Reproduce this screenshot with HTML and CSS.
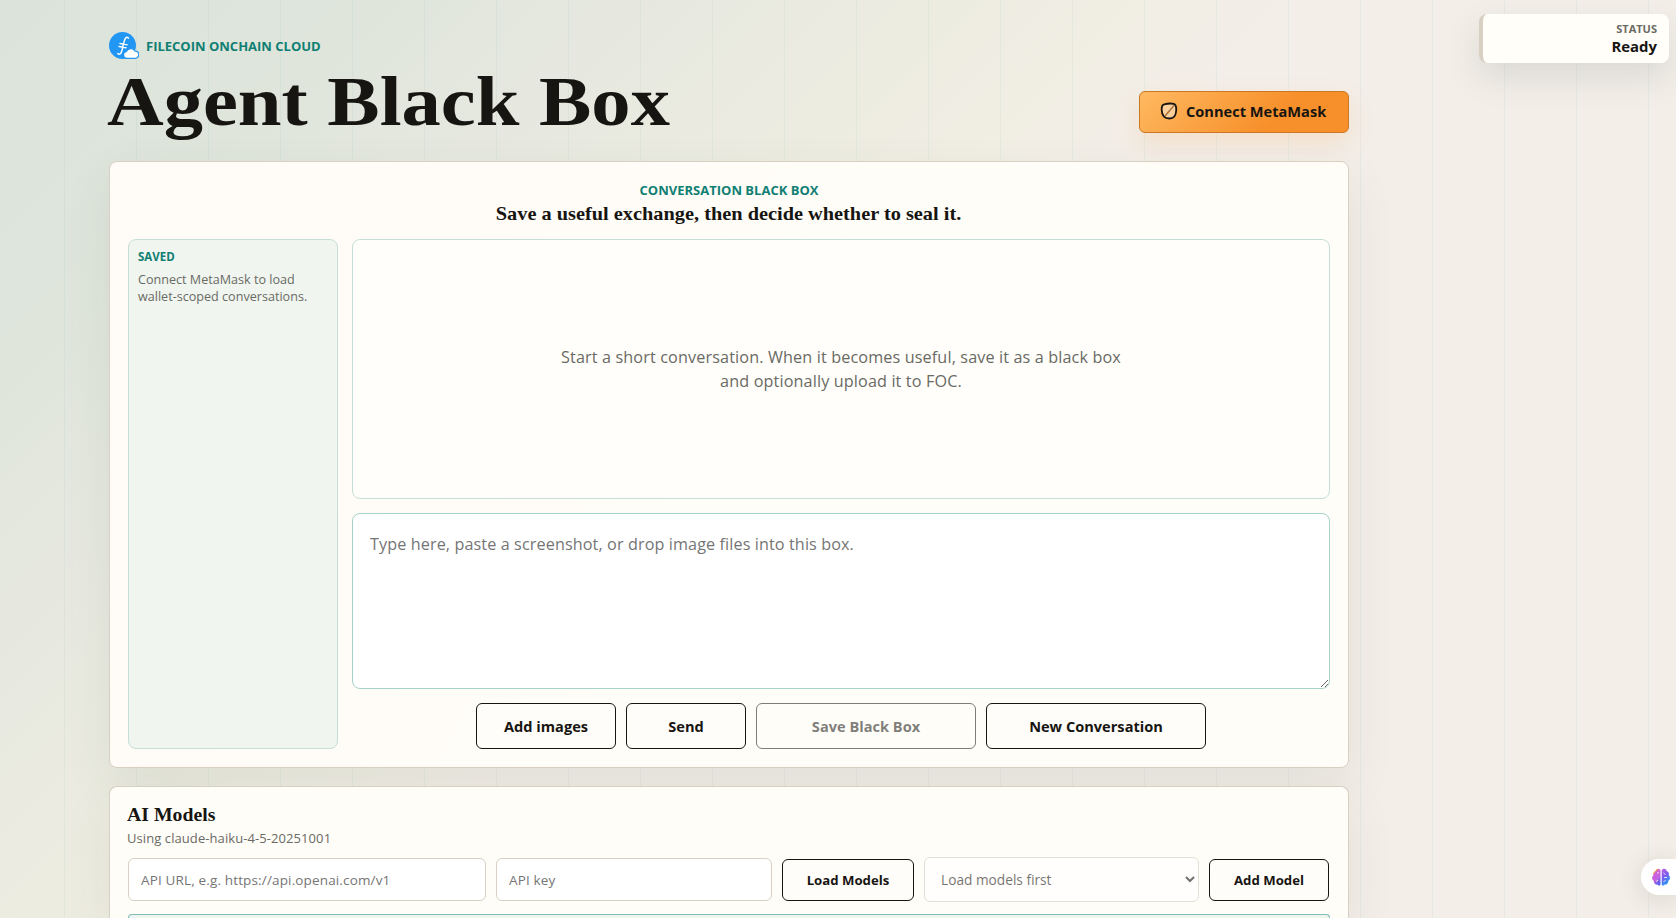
FILE: index.html
```html
<!DOCTYPE html>
<html lang="en">
<head>
  <meta charset="UTF-8">
  <title>Agent Black Box</title>
  <link rel="stylesheet" href="styles.css">
</head>
<body>
  <main class="shell">
    <header class="topbar">
      <div class="brand">
        <div class="brand-row">
          <svg class="logo" width="30" height="28" viewBox="0 0 30 28">
            <circle cx="13.500" cy="13.500" r="13.500" fill="#2196f3"/>
            <path d="M19.500 6.200C17.800 4 16 6 15.300 9L12.800 19C12.100 21.800 10.600 23 8.800 21.600M11 11.500l7 1.200M10 14.500l7 1.200" fill="none" stroke="#fff" stroke-width="1.400" stroke-linecap="round"/>
            <path d="M17.500 26.300a3.500 3.500 0 0 1-.2-6.900 5 5 0 0 1 8.800-.3 3.600 3.600 0 0 1 .2 7.200z" fill="#fff" stroke="#2196f3" stroke-width="1.300"/>
          </svg>
          <span class="eyebrow">FILECOIN ONCHAIN CLOUD</span>
        </div>
        <h1>Agent Black Box</h1>
      </div>
      <button class="wallet">
        <svg width="18" height="18" viewBox="0 0 18 18">
          <path d="M4.200 2.300Q9 1 13.800 1.800Q16.600 3 16.200 8.500Q15.800 16.500 9.500 16.500Q2 16.500 1.700 8Q1.400 3 4.200 2.300z" fill="#fbd09a" stroke="#171512" stroke-width="1.800"/>
          <path d="M5 14L14 3.500" stroke="#a4713c" stroke-width="1.400"/>
        </svg>
        <span>Connect MetaMask</span>
      </button>
    </header>

    <section class="panel conversation">
      <div class="panel-title">
        <span class="eyebrow">CONVERSATION BLACK BOX</span>
        <h2>Save a useful exchange, then decide whether to seal it.</h2>
      </div>
      <div class="workspace">
        <aside class="saved">
          <h3>SAVED</h3>
          <p>Connect MetaMask to load<br>wallet-scoped conversations.</p>
        </aside>
        <div class="chat">
          <div class="messages">
            <p>Start a short conversation. When it becomes useful, save it as a black box<br>and optionally upload it to FOC.</p>
          </div>
          <textarea class="composer" placeholder="Type here, paste a screenshot, or drop image files into this box."></textarea>
          <div class="actions">
            <button class="btn add">Add images</button>
            <button class="btn send">Send</button>
            <button class="btn wide" disabled>Save Black Box</button>
            <button class="btn wide">New Conversation</button>
          </div>
        </div>
      </div>
    </section>

    <section class="panel models">
      <h2>AI Models</h2>
      <p class="using">Using claude-haiku-4-5-20251001</p>
      <div class="model-form">
        <input type="text" placeholder="API URL, e.g. https://api.openai.com/v1">
        <input type="text" placeholder="API key">
        <button class="btn small">Load Models</button>
        <select disabled><option>Load models first</option></select>
        <button class="btn small">Add Model</button>
      </div>
      <div class="model-list"></div>
    </section>
  </main>

  <div class="status">
    <span class="status-label">STATUS</span>
    <strong>Ready</strong>
  </div>

  <div class="assistant">
    <svg width="18" height="18" viewBox="0 0 18 18">
      <defs>
        <linearGradient id="lobe-left" x1="0" y1="0" x2=".5" y2="1">
          <stop offset="0" stop-color="#f5a13c"/>
          <stop offset=".28" stop-color="#f0a04c"/>
          <stop offset=".36" stop-color="#cf62dc"/>
          <stop offset=".7" stop-color="#c462e0"/>
          <stop offset="1" stop-color="#5b62f0"/>
        </linearGradient>
        <linearGradient id="lobe-right" x1="0" y1="0" x2=".4" y2="1">
          <stop offset="0" stop-color="#c45fe0"/>
          <stop offset=".5" stop-color="#7a5cf0"/>
          <stop offset="1" stop-color="#2c9cf4"/>
        </linearGradient>
      </defs>
      <path d="M8.500 2.200C7.500-.2 3.600.3 3.500 3 1.300 3.400.8 6 1.500 7.200-.6 8.800-.1 12 1.800 12.700 1.500 15.500 4 17 5.500 16.600 6.700 18.500 8.500 17.600 8.500 16z" fill="url(#lobe-left)"/>
      <path d="M9.700 2.200C10.700-.2 14.500.3 14.600 3 16.800 3.400 17.300 6 16.600 7.200 18.700 8.800 18.200 12 16.300 12.700 16.600 15.500 14.100 17 12.600 16.600 11.400 18.500 9.700 17.600 9.700 16z" fill="url(#lobe-right)"/>
      <path d="M5 5.500l2-1.500M4 13.500l2-1.500M11.500 5l2 1.500M12 9.500h3M11.500 13.500l2-1" stroke="#fff" stroke-width=".8" fill="none"/>
    </svg>
  </div>
</body>
</html>
```
FILE: styles.css
```css
:root {
  --ink: #171512;
  --muted: #6a6a64;
  --teal: #0f7f73;
  --line: #d8d0c2;
  --line-teal: #c5dfd8;
}

* {
  box-sizing: border-box;
}

body {
  margin: 0;
  height: 918px;
  overflow: hidden;
  font-family: "Open Sans", "Noto Sans", sans-serif;
  color: var(--ink);
  background:
    repeating-linear-gradient(90deg, transparent 0 64px, rgba(15, 127, 115, 0.05) 64px 65px, transparent 65px 72px),
    linear-gradient(135deg, #dbe4db 0%, #dfe5db 14%, #e6e8df 24%, #edece1 37%, #f1eee4 44%, #f3eee8 50%);
}

button,
input,
select,
textarea {
  font: inherit;
  color: inherit;
}

h1,
h2,
h3,
p {
  margin: 0;
}

.shell {
  width: 1240px;
  height: 918px;
  margin-left: 109px;
  padding-top: 32px;
}

.topbar {
  display: flex;
  justify-content: space-between;
  height: 129px;
}

.brand-row {
  display: flex;
  align-items: center;
  gap: 7px;
  height: 28px;
}

.eyebrow {
  font-size: 13px;
  line-height: 18px;
  font-weight: 700;
  color: var(--teal);
}

h1 {
  width: max-content;
  margin: 7px 0 0 -2px;
  font-family: "Liberation Serif", serif;
  font-size: 70px;
  line-height: 70px;
  transform: scaleX(1.122);
  transform-origin: left;
  white-space: nowrap;
}

.wallet {
  display: flex;
  align-items: center;
  gap: 8px;
  width: 210px;
  height: 42px;
  margin-top: 59px;
  padding: 0 0 2px 20px;
  border: 1px solid #cb7725;
  border-radius: 6px;
  background: linear-gradient(135deg, #ffb961, #f7902b 65%);
  box-shadow: 0 10px 24px rgba(247, 144, 43, 0.15);
  font-size: 14.600px;
  font-weight: 700;
  white-space: nowrap;
}

.panel {
  border: 1px solid var(--line);
  border-radius: 8px;
  background: #fffcf7;
  box-shadow: 0 18px 50px rgba(45, 75, 50, 0.08);
}

.conversation {
  height: 607px;
  padding: 18px;
  background: linear-gradient(120deg, #fffbf6, #fffdf8 50%);
}

.panel-title {
  display: flex;
  flex-direction: column;
  align-items: center;
  height: 59px;
}

.panel-title .eyebrow {
  margin-top: 1px;
}

h2 {
  width: max-content;
  font-family: "Liberation Serif", serif;
  font-size: 19px;
  line-height: 22px;
  transform: scaleX(1.07);
  transform-origin: left;
}

.panel-title h2 {
  margin-top: 4px;
  transform-origin: center;
}

.workspace {
  display: grid;
  grid-template-columns: 210px 978px;
  gap: 14px;
  height: 510px;
}

.saved {
  padding: 9px;
  border: 1px solid var(--line-teal);
  border-radius: 8px;
  background: #f0f5f0;
}

.saved h3 {
  font-size: 11.500px;
  line-height: 16px;
  color: var(--teal);
}

.saved p {
  margin-top: 6px;
  font-size: 12.600px;
  line-height: 17px;
  color: var(--muted);
  white-space: nowrap;
}

.chat {
  display: grid;
  grid-template-rows: 260px 176px 46px;
  gap: 14px;
}

.messages {
  display: grid;
  place-items: center;
  border: 1px solid var(--line-teal);
  border-radius: 8px;
  background: #fffefa;
  font-size: 16.200px;
  line-height: 24px;
  letter-spacing: 0.130px;
  text-align: center;
  color: var(--muted);
  white-space: nowrap;
}

.composer {
  width: 100%;
  height: 176px;
  padding: 17px;
  border: 1px solid #a5d1c8;
  border-radius: 8px;
  outline: none;
  background: #fff;
  font-size: 16.200px;
  line-height: 26px;
  letter-spacing: 0.100px;
}

::placeholder {
  color: #757575;
  opacity: 1;
}

.actions {
  display: flex;
  justify-content: center;
  gap: 10px;
}

.btn {
  padding: 0;
  border: 1px solid var(--ink);
  border-radius: 6px;
  background: #fffdf9;
  font-size: 14.600px;
  font-weight: 700;
  white-space: nowrap;
}

.btn:disabled {
  opacity: 0.55;
}

.add {
  width: 140px;
}

.send {
  width: 120px;
}

.wide {
  width: 220px;
}

.models {
  height: 132px;
  margin-top: 18px;
  padding: 17px 18px 0;
  border-bottom: 0;
  border-radius: 8px 8px 0 0;
  background: #fffdf8;
}

.models h2 {
  transform: scaleX(1.04);
}

.using {
  font-size: 13px;
  line-height: 18px;
  letter-spacing: 0.080px;
  margin-top: 3px;
  color: var(--muted);
}

.models h2,
.using {
  margin-left: -1px;
}

.model-form {
  display: grid;
  grid-template-columns: 358px 276px 132px 275px 120px;
  align-items: center;
  gap: 10px;
  height: 45px;
  margin-top: 10px;
}

.model-form input {
  height: 43px;
  padding: 0 12px;
  border: 1px solid var(--line);
  border-radius: 6px;
  background: #fff;
  font-size: 13.500px;
  letter-spacing: 0.150px;
}

.small {
  height: 42px;
  font-size: 13.200px;
}

.model-form select {
  height: 45px;
  padding: 0 0 0 12px;
  border: 1px solid #cfcfc4;
  border-radius: 6px;
  background: #fff;
  font-size: 13.700px;
  color: #171512;
  opacity: 0.6;
}

.model-list {
  height: 4px;
  margin-top: 12px;
  border: 1px solid #7fbdb2;
  border-bottom: 0;
  border-radius: 8px 8px 0 0;
  background: #eef5f0;
}

/* floats over the page, top right */
.status {
  position: absolute;
  top: 14px;
  right: 7px;
  display: flex;
  flex-direction: column;
  width: 190px;
  height: 49px;
  padding: 7px 12px 0 0;
  border-left: 4px solid #d8d0c2;
  border-radius: 8px;
  background: #fffef9;
  box-shadow: 0 14px 34px rgba(45, 75, 70, 0.13);
  text-align: right;
}

.status-label {
  font-size: 11px;
  line-height: 16px;
  font-weight: 700;
  color: var(--muted);
}

.status strong {
  font-size: 14.900px;
  line-height: 19px;
}

.assistant {
  position: absolute;
  top: 859px;
  right: 0;
  width: 35px;
  height: 36px;
  padding: 9px 0 0 11px;
  border-radius: 18px 0 0 18px;
  background: #fff;
  box-shadow: 0 4px 24px rgba(60, 70, 40, 0.14);
}

.assistant svg {
  display: block;
}
```
